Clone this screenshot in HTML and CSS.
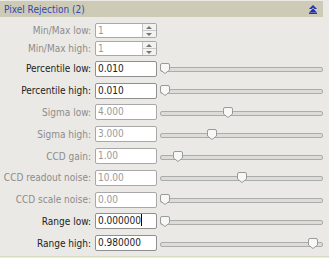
FILE: index.html
```html
<!DOCTYPE html>
<html lang="en">
<head>
    <meta charset="UTF-8">
    <title>Pixel Rejection</title>
    <link rel="stylesheet" href="styles.css">
</head>
<body>
    <div class="panel">
        <div class="header">
            <span class="title">Pixel Rejection (2)</span>
            <svg class="collapse" width="8" height="9" viewBox="0 0 8 9">
                <path d="M4 0 L8 4 H5.5 L4 2.5 L2.5 4 H0 Z" fill="#1f2fb8"/>
                <path d="M4 3.5 L8 7.5 H0 Z" fill="#1f2fb8"/>
                <rect x="0" y="7.8" width="8" height="1.2" fill="#1f2fb8"/>
            </svg>
        </div>

        <div class="rows">
            <div class="row small">
                <label class="off">Min/Max low:</label>
                <div class="spin off"><span class="val">1</span><span class="arrows"><i class="up"></i><i class="down"></i></span></div>
                <div></div>
            </div>
            <div class="row small">
                <label class="off">Min/Max high:</label>
                <div class="spin off"><span class="val">1</span><span class="arrows"><i class="up"></i><i class="down"></i></span></div>
                <div></div>
            </div>

            <div class="row first">
                <label>Percentile low:</label>
                <div class="field">0.010</div>
                <div class="slider"><svg class="knob" style="--p: 0" viewBox="0 0 10 11"><path d="M0.5 2 Q0.5 0.5 2 0.5 H8 Q9.5 0.5 9.5 2 V7 L5 10.5 L0.5 7 Z"/></svg></div>
            </div>
            <div class="row">
                <label>Percentile high:</label>
                <div class="field">0.010</div>
                <div class="slider"><svg class="knob" style="--p: 0" viewBox="0 0 10 11"><path d="M0.5 2 Q0.5 0.5 2 0.5 H8 Q9.5 0.5 9.5 2 V7 L5 10.5 L0.5 7 Z"/></svg></div>
            </div>
            <div class="row">
                <label class="off">Sigma low:</label>
                <div class="field off">4.000</div>
                <div class="slider"><svg class="knob" style="--p: 0.41" viewBox="0 0 10 11"><path d="M0.5 2 Q0.5 0.5 2 0.5 H8 Q9.5 0.5 9.5 2 V7 L5 10.5 L0.5 7 Z"/></svg></div>
            </div>
            <div class="row">
                <label class="off">Sigma high:</label>
                <div class="field off">3.000</div>
                <div class="slider"><svg class="knob" style="--p: 0.305" viewBox="0 0 10 11"><path d="M0.5 2 Q0.5 0.5 2 0.5 H8 Q9.5 0.5 9.5 2 V7 L5 10.5 L0.5 7 Z"/></svg></div>
            </div>
            <div class="row">
                <label class="off">CCD gain:</label>
                <div class="field off">1.00</div>
                <div class="slider"><svg class="knob" style="--p: 0.085" viewBox="0 0 10 11"><path d="M0.5 2 Q0.5 0.5 2 0.5 H8 Q9.5 0.5 9.5 2 V7 L5 10.5 L0.5 7 Z"/></svg></div>
            </div>
            <div class="row">
                <label class="off">CCD readout noise:</label>
                <div class="field off">10.00</div>
                <div class="slider"><svg class="knob" style="--p: 0.5" viewBox="0 0 10 11"><path d="M0.5 2 Q0.5 0.5 2 0.5 H8 Q9.5 0.5 9.5 2 V7 L5 10.5 L0.5 7 Z"/></svg></div>
            </div>
            <div class="row">
                <label class="off">CCD scale noise:</label>
                <div class="field off">0.00</div>
                <div class="slider"><svg class="knob" style="--p: 0" viewBox="0 0 10 11"><path d="M0.5 2 Q0.5 0.5 2 0.5 H8 Q9.5 0.5 9.5 2 V7 L5 10.5 L0.5 7 Z"/></svg></div>
            </div>
            <div class="row">
                <label>Range low:</label>
                <div class="field">0.000000<span class="caret"></span></div>
                <div class="slider"><svg class="knob" style="--p: 0" viewBox="0 0 10 11"><path d="M0.5 2 Q0.5 0.5 2 0.5 H8 Q9.5 0.5 9.5 2 V7 L5 10.5 L0.5 7 Z"/></svg></div>
            </div>
            <div class="row">
                <label>Range high:</label>
                <div class="field">0.980000</div>
                <div class="slider"><svg class="knob" style="--p: 0.97" viewBox="0 0 10 11"><path d="M0.5 2 Q0.5 0.5 2 0.5 H8 Q9.5 0.5 9.5 2 V7 L5 10.5 L0.5 7 Z"/></svg></div>
            </div>
        </div>
    </div>
</body>
</html>
```

FILE: styles.css
```css
* {
    margin: 0;
    padding: 0;
    box-sizing: border-box;
}

body {
    font-family: 'DejaVu Sans Condensed', 'DejaVu Sans', sans-serif;
    font-stretch: semi-condensed;
    font-size: 10px;
    background-color: #ebe9e5;
    color: #222;
    width: 329px;
    height: 258px;
    overflow: hidden;
}

.panel {
    height: 256px;
    border-bottom: 1px solid #d9dcc4;
}

.header {
    margin: 1px 6px 0 0;
    height: 16px;
    background-color: #cdcbb6;
    display: flex;
    align-items: center;
    justify-content: space-between;
    padding: 0 6px 0 4px;
}

.title {
    color: #3447b4;
}

.collapse {
    display: block;
}

.rows {
    padding-top: 4px;
}

.row {
    display: grid;
    grid-template-columns: 91px 62px 1fr;
    column-gap: 4px;
    align-items: center;
    height: 21.8px;
    padding-right: 6px;
}

.row.small {
    height: 18px;
}

.row.first {
    margin-top: 1px;
}

label {
    text-align: right;
    white-space: nowrap;
    color: #222;
}

label.off {
    color: #8c8c8c;
}

.field {
    height: 16px;
    background: #fff;
    border: 1px solid #8f8f8f;
    border-radius: 2px;
    padding: 0 2px;
    line-height: 14px;
    color: #222;
}

.field.off {
    color: #9a9a9a;
    border-color: #a8a8a8;
}

.caret {
    display: inline-block;
    width: 1px;
    height: 12px;
    background: #000;
    vertical-align: -2px;
}

.spin {
    height: 15px;
    width: 62px;
    display: flex;
    background: #fff;
    border: 1px solid #a8a8a8;
    border-radius: 2px;
    color: #9a9a9a;
}

.spin .val {
    flex: 1;
    padding: 0 2px;
    line-height: 13px;
    border-right: 1px solid #c4c4c4;
}

.arrows {
    width: 13px;
    display: flex;
    flex-direction: column;
    background: #f2f2f0;
}

.arrows i {
    flex: 1;
    position: relative;
}

.arrows .up {
    border-bottom: 1px solid #c8c8c8;
}

.arrows i::after {
    content: "";
    position: absolute;
    left: 3px;
    top: 2px;
    border-left: 3px solid transparent;
    border-right: 3px solid transparent;
}

.arrows .up::after {
    border-bottom: 3px solid #777;
}

.arrows .down::after {
    border-top: 3px solid #777;
    top: 2px;
}

.slider {
    position: relative;
    height: 11px;
    margin-left: -1px;
}

.slider::before {
    content: "";
    position: absolute;
    left: 0;
    right: 0;
    top: 4px;
    height: 3px;
    border-radius: 2px;
    background: #dcdcd9;
    border: 1px solid #acacaa;
}

.knob {
    position: absolute;
    top: 0;
    left: calc(var(--p) * (100% - 10px));
    width: 10px;
    height: 11px;
    display: block;
}

.knob path {
    fill: #f7f7f5;
    stroke: #9a9a98;
    stroke-width: 1;
}
```
